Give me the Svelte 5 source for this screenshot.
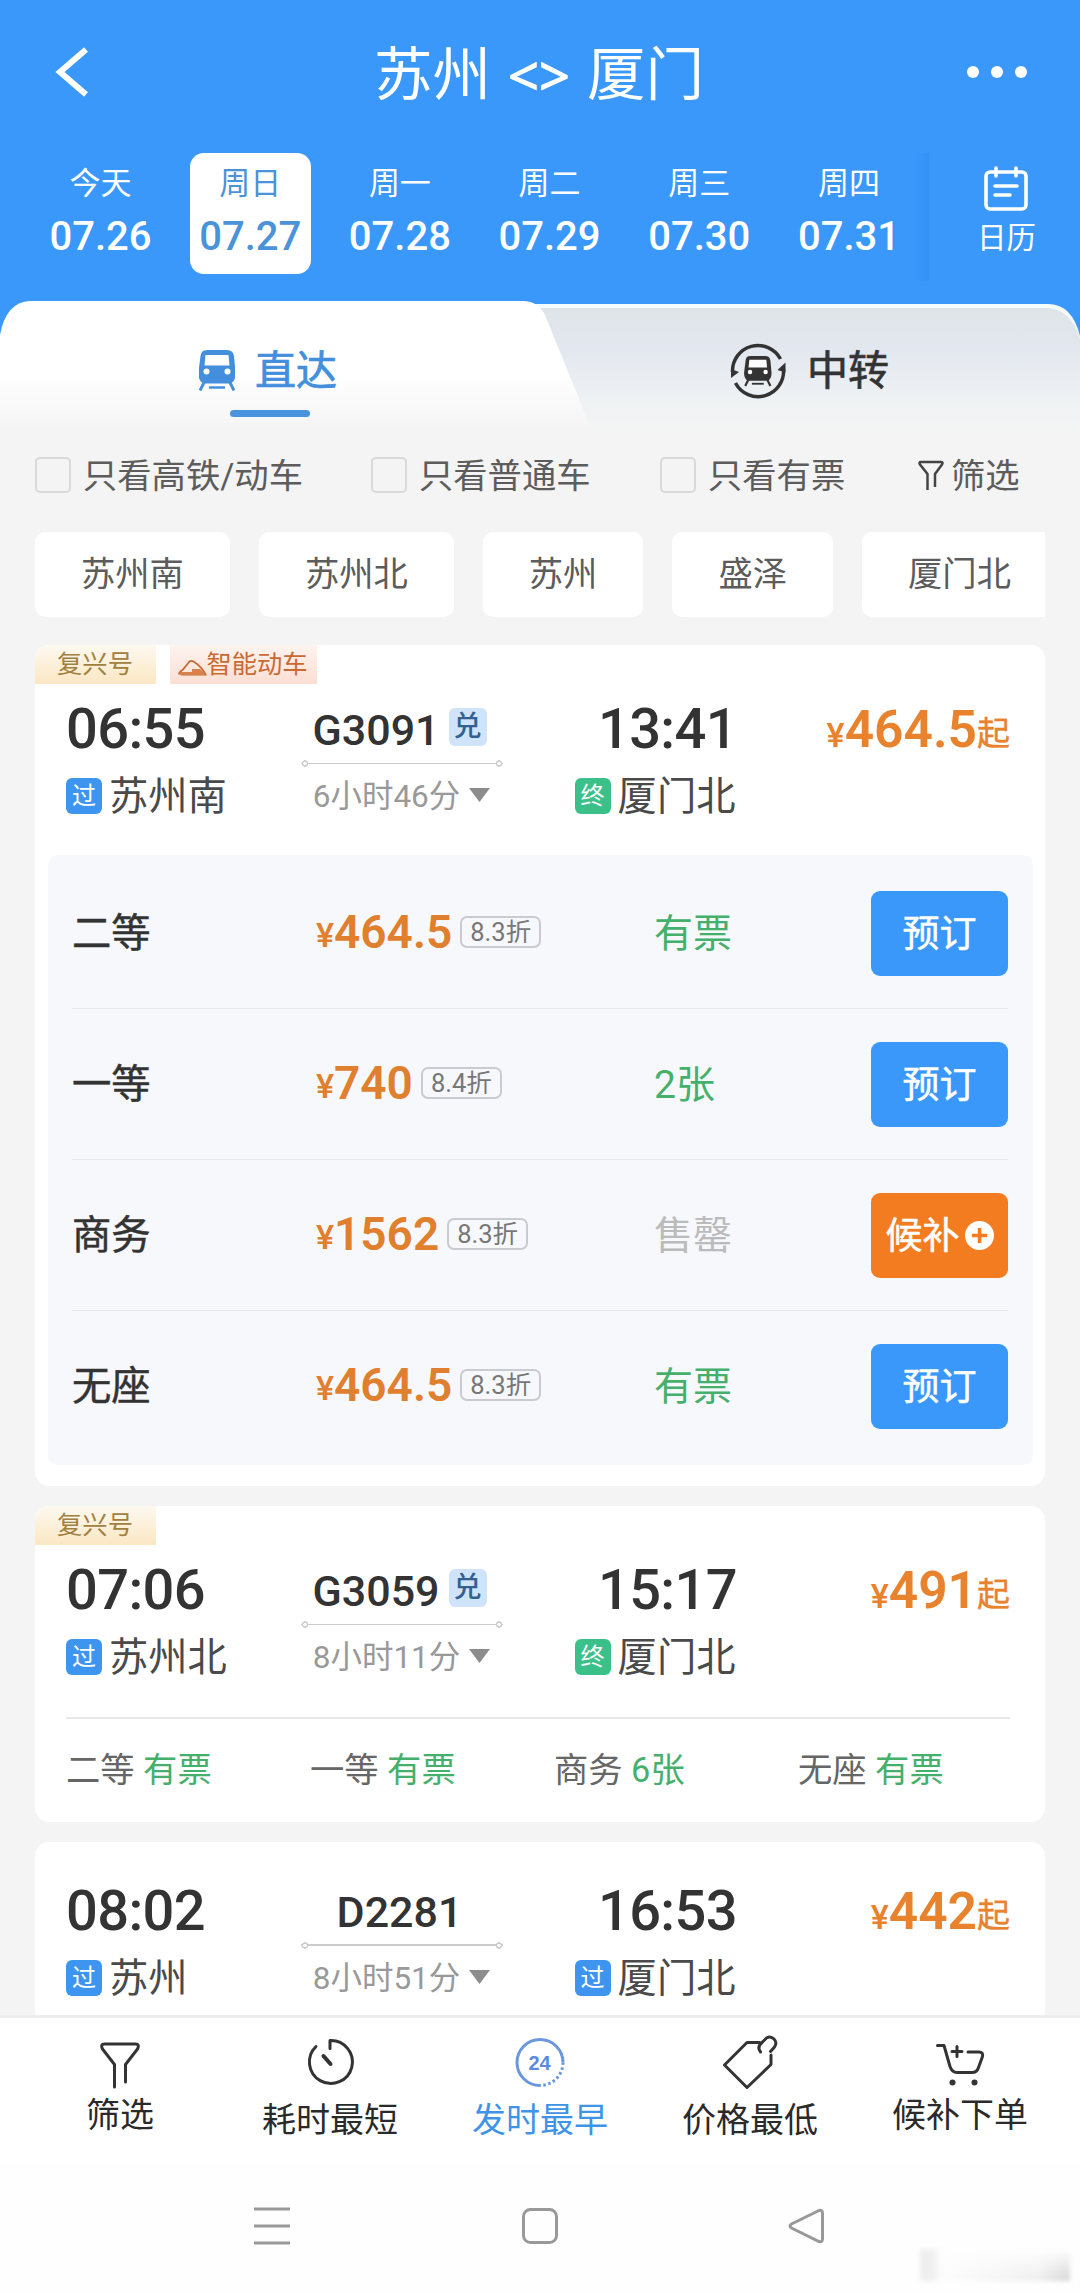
<script lang="ts">
    type Seat = { name: string; price: string; off: string; left: string };

    const days = [
        { label: "今天", date: "07.26" },
        { label: "周日", date: "07.27" },
        { label: "周一", date: "07.28" },
        { label: "周二", date: "07.29" },
        { label: "周三", date: "07.30" },
        { label: "周四", date: "07.31" },
    ];
    let day = $state("07.27");

    const checks = ["只看高铁/动车", "只看普通车", "只看有票"];
    const stations = ["苏州南", "苏州北", "苏州", "盛泽", "厦门北"];

    const seats: Seat[] = [
        { name: "二等", price: "464.5", off: "8.3折", left: "有票" },
        { name: "一等", price: "740", off: "8.4折", left: "2张" },
        { name: "商务", price: "1562", off: "8.3折", left: "售罄" },
        { name: "无座", price: "464.5", off: "8.3折", left: "有票" },
    ];

    const trains = [
        {
            no: "G3091", from: "苏州南", dep: "06:55", to: "厦门北", arr: "13:41", stop: "终",
            time: "6小时46分", price: "464.5", fuxing: true, smart: true, redeem: true,
            seats, brief: [],
        },
        {
            no: "G3059", from: "苏州北", dep: "07:06", to: "厦门北", arr: "15:17", stop: "终",
            time: "8小时11分", price: "491", fuxing: true, smart: false, redeem: true,
            seats: [],
            brief: [["二等", "有票"], ["一等", "有票"], ["商务", "6张"], ["无座", "有票"]],
        },
        {
            no: "D2281", from: "苏州", dep: "08:02", to: "厦门北", arr: "16:53", stop: "过",
            time: "8小时51分", price: "442", fuxing: false, smart: false, redeem: false,
            seats: [], brief: [],
        },
    ];
</script>

{#snippet train()}
    <path
        d="M8 0h20q6 0 7 6l1.500 16q.5 10-6 11.500h-25q-6.500-1.500-6-11.500L1.500 6Q2 0 8 0Z"
        fill="currentColor"
    />
    <path d="M6.500 5h23l1 10.500h-25Z" fill="#fbfcfd" />
    <circle cx="7.500" cy="21.500" r="3" fill="#fff" />
    <circle cx="28.500" cy="21.500" r="3" fill="#fff" />
    <path d="M5 32.500 1 40.500M31 32.500l4 8" stroke="currentColor" stroke-width="3" />
    <path d="M10 37.500h16" stroke="currentColor" stroke-width="2.500" />
{/snippet}

<div class="phone">
    <header>
        <div class="title-bar">
            <svg class="back" width="60" height="50" viewBox="0 0 60 50">
                <path d="M37 2.500 11 25l26 22.500" />
            </svg>
            <h1><span>苏州</span><span class="swap">&lt;&gt;</span><span>厦门</span></h1>
            <div class="more"><i></i><i></i><i></i></div>
        </div>

        <div class="days">
            {#each days as d}
                <button class:on={day === d.date} onclick={() => (day = d.date)}>
                    <span>{d.label}</span>
                    <b>{d.date}</b>
                </button>
            {/each}
            <div class="edge"></div>
            <div class="calendar">
                <svg width="46" height="48" viewBox="0 0 46 48">
                    <rect x="3" y="8" width="40" height="37" rx="4" />
                    <path d="M13 4v8M33 4v8M12 22h22M12 31h15" />
                </svg>
                <span>日历</span>
            </div>
        </div>
    </header>

    <div class="tabs">
        <svg class="shape" width="1080" height="130" viewBox="0 0 1080 130">
            <defs>
                <linearGradient id="grey" x1="0" y1="0" x2="0" y2="1">
                    <stop offset="0" stop-color="#dfe4e8" />
                    <stop offset=".35" stop-color="#e3e8f0" />
                    <stop offset=".8" stop-color="#f0f3f4" />
                    <stop offset="1" stop-color="#f4f4f4" />
                </linearGradient>
                <linearGradient id="white" x1="0" y1="0" x2="0" y2="1">
                    <stop offset=".55" stop-color="#fff" />
                    <stop offset="1" stop-color="#f4f4f4" />
                </linearGradient>
            </defs>
            <path d="M500 3h548q24 0 32 32v95H500Z" fill="#f3fbfd" />
            <path d="M500 7h546q24 0 34 30v93H500Z" fill="url(#grey)" />
            <path d="M0 130V34Q6 1 30 0h493q15 0 22 14l47 116Z" fill="url(#white)" />
        </svg>
        <div class="tab active">
            <svg width="36" height="41" viewBox="0 0 36 41">{@render train()}</svg>
            <span>直达</span>
        </div>
        <div class="tab">
            <svg class="loop" width="58" height="58" viewBox="0 0 58 58">
                <g fill="none" stroke="currentColor" stroke-width="3.500">
                    <path d="M51.500 17A25.500 25.500 0 0 0 3.500 30" />
                    <path d="M6.500 41A25.500 25.500 0 0 0 54.500 27" />
                </g>
                <path d="m2 36 8-6-8-3ZM56.500 20.500 48.500 28l8 2.500Z" fill="currentColor" />
                <g transform="translate(15.500 14) scale(.74 .74)">{@render train()}</g>
            </svg>
            <span>中转</span>
        </div>
    </div>

    <div class="filters">
        {#each checks as c}
            <label><i class="box"></i><span>{c}</span></label>
        {/each}
        <div class="filter">
            <svg width="28" height="32" viewBox="0 0 28 32">
                <path d="M10.500 31V15L3 5.500Q1.500 3 4 3h20q2.500 0 1 2.500L18 15v13" />
            </svg>
            <span>筛选</span>
        </div>
    </div>

    <div class="chips">
        {#each stations as s}<span>{s}</span>{/each}
    </div>

    <main>
        {#each trains as t}
            <section>
                <div class="tags" class:empty={!t.fuxing}>
                    {#if t.fuxing}<span class="fuxing">复兴号</span>{/if}
                    {#if t.smart}
                        <span class="smart">
                            <svg width="29" height="18" viewBox="0 0 29 18">
                                <path d="M1 15.500Q1 13 5 10.500L11 3q2-2 4.500-.5Q24 8 27.500 15.500H3" />
                                <path class="fill" d="M14 10h8q4 3 5 6H2v-3h12Z" />
                            </svg>智能动车
                        </span>
                    {/if}
                </div>

                <div class="trip">
                    <div class="stop">
                        <b class="clock">{t.dep}</b>
                        <div class="place"><i class="mark">过</i><span>{t.from}</span></div>
                    </div>
                    <div class="ride">
                        <div class="no">{t.no}{#if t.redeem}<i>兑</i>{/if}</div>
                        <div class="rule"></div>
                        <div class="time">
                            <span>{t.time}</span>
                            <svg width="21" height="14" viewBox="0 0 21 14"><path d="M0 0h21L10.500 14Z" /></svg>
                        </div>
                    </div>
                    <div class="stop end">
                        <b class="clock">{t.arr}</b>
                        <div class="place">
                            <i class="mark" class:last={t.stop === "终"}>{t.stop}</i><span>{t.to}</span>
                        </div>
                    </div>
                    <div class="fare"><small>¥</small><b>{t.price}</b><em>起</em></div>
                </div>

                {#if t.seats.length}
                    <div class="seats">
                        {#each t.seats as s}
                            <div class="seat">
                                <span class="name">{s.name}</span>
                                <span class="price">
                                    <small>¥</small><b>{s.price}</b><i>{s.off}</i>
                                </span>
                                <span class="left" class:none={s.left === "售罄"}>{s.left}</span>
                                {#if s.left === "售罄"}
                                    <button class="wait">
                                        <span>候补</span>
                                        <svg width="29" height="29" viewBox="0 0 29 29">
                                            <circle cx="14.500" cy="14.500" r="14.500" fill="#fff" />
                                            <path d="M14.500 7v15M7 14.500h15" stroke="#f47c20" stroke-width="3.500" />
                                        </svg>
                                    </button>
                                {:else}
                                    <button><span>预订</span></button>
                                {/if}
                            </div>
                        {/each}
                    </div>
                {/if}

                {#if t.brief.length}
                    <div class="brief">
                        {#each t.brief as [name, left]}
                            <span>{name} <em>{left}</em></span>
                        {/each}
                    </div>
                {/if}
            </section>
        {/each}
    </main>

    <nav>
        <div>
            <svg width="60" height="60" viewBox="0 0 60 60">
                <path d="M24.500 53V30.500L12.500 15Q10 10 14.500 10h31q4.500 0 2 5L35.500 30.500V48" />
            </svg>
            <span>筛选</span>
        </div>
        <div class="low">
            <svg width="60" height="60" viewBox="0 0 60 60">
                <path d="M16 12.500A21.500 21.500 0 1 0 30 6.500v8" />
                <path d="m23.500 22 7 8" stroke-width="4" />
            </svg>
            <span>耗时最短</span>
        </div>
        <div class="low on">
            <svg width="60" height="60" viewBox="0 0 60 60">
                <path d="M30 51.500A23 23 0 1 1 53 28.500" />
                <path d="M53 28.500A23 23 0 0 1 30 51.500" stroke-dasharray="2.500 2.500" />
                <text x="29.500" y="36" text-anchor="middle">24</text>
            </svg>
            <span>发时最早</span>
        </div>
        <div class="low">
            <svg width="60" height="60" viewBox="0 0 60 60">
                <path d="M39.500 8.500H27L4.500 31 27 53.500 51 30.500V21" />
                <path d="M40.500 18q-4-5 2-10l4-4q4-2.500 7.500 1t.5 8l-4 4.500" />
            </svg>
            <span>价格最低</span>
        </div>
        <div>
            <svg width="60" height="60" viewBox="0 0 60 60">
                <path d="M7.500 11.500H14l6 21q2 6 7 6h15q5 0 6.500-5l4-11q1-4.500-3.500-4.500H38" />
                <path d="M27 12.500v10M22 17.500h10" />
                <circle cx="22.500" cy="48.500" r="3" />
                <circle cx="44.500" cy="48.500" r="3" />
            </svg>
            <span>候补下单</span>
        </div>
    </nav>

    <footer>
        <svg width="40" height="40" viewBox="0 0 40 40"><path d="M2 3h36M2 20h36M2 37h36" /></svg>
        <svg width="40" height="40" viewBox="0 0 40 40">
            <rect x="3.500" y="3.500" width="33" height="33" rx="7" />
        </svg>
        <svg width="40" height="40" viewBox="0 0 40 40">
            <path d="M31 4.500 3.500 18q-3 2 0 4L31 35.500q3.500 1 3.500-2.500V7q0-3.500-3.500-2.500Z" />
        </svg>
        <div class="smudge"></div>
    </footer>
</div>

<style>
    :global(body) {
        margin: 0;
        background: #f4f4f4;
    }
    .phone {
        width: 1080px;
        height: 2292px;
        overflow: hidden;
        display: flex;
        flex-direction: column;
        background: #f4f4f4;
        color: #333;
        font-family: Roboto, "Noto Sans CJK SC", sans-serif;
        font-weight: 400;
    }
    i,
    em {
        font-style: normal;
    }
    button {
        border: 0;
        padding: 0;
        font: inherit;
        color: inherit;
        background: none;
    }

    header {
        height: 301px;
        background: #3a98fb;
        color: #fff;
        flex: none;
        margin-bottom: -40px;
        padding-bottom: 40px;
    }
    .title-bar {
        height: 144px;
        display: flex;
        align-items: center;
        justify-content: space-between;
        padding: 0 53px 0 49px;
    }
    .back path {
        fill: none;
        stroke: #fff;
        stroke-width: 6;
    }
    h1 {
        display: flex;
        gap: 17px;
        margin: 6px 0 0 2px;
        font-size: 58.5px;
        line-height: 60px;
        font-weight: 400;
    }
    .swap {
        font-family: "Noto Sans", sans-serif;
        font-size: 54px;
        -webkit-text-stroke: 1px #fff;
    }
    .more {
        display: flex;
        gap: 12px;
    }
    .more i {
        width: 12px;
        height: 12px;
        border-radius: 50%;
        background: #fff;
    }
    .days {
        display: flex;
        margin: 9px 0 0 25px;
    }
    .days button {
        width: 121px;
        height: 121px;
        margin: 0 14.350px;
        border-radius: 14px;
        display: flex;
        flex-direction: column;
        align-items: center;
    }
    .days button:first-child {
        margin-left: 15px;
    }
    .days button.on {
        background: #fff;
        color: #4a93d8;
    }
    .days span {
        font-size: 31px;
        line-height: 36px;
        margin-top: 13px;
    }
    .days b {
        font-size: 40px;
        line-height: 48px;
        margin-top: 11px;
        font-weight: 500;
    }
    .edge {
        width: 16px;
        height: 128px;
        margin-left: -11px;
        background: linear-gradient(90deg, transparent, rgba(20, 100, 220, 0.15));
    }
    .calendar {
        flex: 1;
        display: flex;
        flex-direction: column;
        align-items: center;
        padding: 11px 0 0 4px;
    }
    .calendar svg {
        fill: none;
        stroke: #fff;
        stroke-width: 3.6;
        stroke-linecap: round;
    }
    .days .calendar span {
        font-size: 29.5px;
        margin-top: 8px;
    }

    .tabs {
        position: relative;
        height: 130px;
        flex: none;
        display: flex;
    }
    .shape {
        position: absolute;
        inset: 0;
        background: linear-gradient(#3a98fb 40px, transparent 40px);
    }
    .tab {
        position: relative;
        box-sizing: border-box;
        width: 540px;
        height: 138px;
        display: flex;
        align-items: center;
        justify-content: center;
        gap: 20px;
        padding-right: 2px;
        font-size: 41px;
        -webkit-text-stroke: 0.7px currentColor;
    }
    .tab svg {
        margin-top: 1px;
    }
    .tab span {
        margin-top: -6px;
    }
    .tab.active {
        padding-right: 4px;
        color: #438fdd;
    }
    .tab.active::after {
        content: "";
        position: absolute;
        left: 230px;
        bottom: 22px;
        width: 80px;
        height: 7px;
        border-radius: 4px;
        background: #4a94df;
    }

    .filters {
        display: flex;
        align-items: center;
        height: 87px;
        padding-left: 35px;
        font-size: 34.3px;
        color: #5c5c5c;
        flex: none;
    }
    .filters span {
        margin-top: -4px;
    }
    .filters label {
        display: flex;
        align-items: center;
        width: 336px;
    }
    .filters label:nth-child(2) {
        width: 289px;
    }
    .filters label:nth-child(3) {
        width: 257px;
    }
    .box {
        width: 32px;
        height: 32px;
        margin-right: 12px;
        border: 2px solid #d9d9d9;
        border-radius: 5px;
    }
    .filter {
        display: flex;
        align-items: center;
        gap: 6px;
    }
    .filter svg {
        fill: none;
        stroke: #444;
        stroke-width: 2.5;
    }

    .chips {
        display: flex;
        gap: 29px;
        flex: none;
        height: 85px;
        margin: 14px 35px 28px;
        overflow: hidden;
    }
    .chips span {
        flex: none;
        padding: 0 46px;
        border-radius: 10px;
        background: #fff;
        color: #5c5c5c;
        font-size: 34.3px;
        line-height: 85px;
    }

    main {
        flex: 1;
        min-height: 0;
        overflow: hidden;
        padding: 0 35px;
    }
    section {
        background: #fff;
        border-radius: 14px;
        margin-bottom: 20px;
        overflow: hidden;
    }
    section:last-child {
        padding-bottom: 60px;
    }
    .tags {
        height: 39px;
        display: flex;
        gap: 14px;
        font-size: 25.3px;
        line-height: 40px;
    }
    .tags.empty {
        height: 24px;
    }
    .fuxing {
        width: 120px;
        padding-right: 1px;
        text-align: center;
        color: #a1803f;
        background: linear-gradient(#fdf9f0, #fbe7c3);
    }
    .smart {
        width: 147px;
        display: flex;
        align-items: center;
        justify-content: center;
        color: #c96a33;
        background: linear-gradient(#fdf3ef, #fbdfd3);
    }
    .smart svg {
        fill: none;
        stroke: #c96a33;
        stroke-width: 1.8;
        margin: 6px -1px 0 -1px;
    }
    .smart .fill {
        fill: #d8814d;
        stroke: none;
    }

    .trip {
        display: grid;
        grid-template-columns: 238px 196px 237px 1fr;
        padding: 16px 35px 0 31px;
        height: 115px;
    }
    .clock {
        display: block;
        height: 56px;
        line-height: 58px;
        margin-bottom: 19px;
        font-size: 56px;
        font-weight: 500;
        letter-spacing: -0.6px;
        color: #333;
    }
    .end {
        text-align: right;
    }
    .place {
        display: flex;
        align-items: center;
        height: 41px;
        font-size: 39.3px;
        line-height: 40px;
        color: #4a4a4a;
    }
    .place span {
        margin-top: 3px;
    }
    .end .place {
        justify-content: flex-end;
        margin-right: 1.5px;
    }
    .mark {
        width: 36px;
        height: 36px;
        line-height: 36px;
        margin-right: 7px;
        border-radius: 6px;
        background: #3e95f0;
        color: #fff;
        font-size: 24px;
        text-align: center;
    }
    .mark.last {
        background: #3cc08a;
    }
    .no {
        display: flex;
        align-items: center;
        justify-content: center;
        height: 56px;
        line-height: 60px;
        padding-top: 2px;
        margin: 0 0 -2px -5px;
        font-size: 43px;
        font-weight: 500;
        gap: 9px;
    }
    .no i {
        width: 38px;
        height: 38px;
        line-height: 38px;
        border-radius: 6px;
        background: #cfe4fa;
        color: #33608f;
        font-size: 28px;
        text-align: center;
        margin-top: -6px;
    }
    .rule {
        height: 9px;
        margin: 3px -3px 7px;
        background:
            radial-gradient(circle at 4px 4.5px, #fff 1.5px, #ccc 2px, #ccc 3px, transparent 3.5px),
            radial-gradient(circle at 198px 4.5px, #fff 1.5px, #ccc 2px, #ccc 3px, transparent 3.5px),
            linear-gradient(transparent 3.5px, #ccc 3.5px, #ccc 5px, transparent 5px);
    }
    .time {
        display: flex;
        align-items: center;
        justify-content: center;
        gap: 9px;
        height: 40px;
        margin-left: -1px;
        font-size: 31.5px;
        color: #999;
    }
    .time span {
        margin-top: -4px;
    }
    .time svg {
        fill: #8c8c8c;
    }
    .fare {
        display: flex;
        align-items: baseline;
        justify-content: flex-end;
        height: 56px;
        line-height: 60px;
        color: #e8822d;
    }
    .fare small {
        font-size: 34px;
        font-weight: 500;
    }
    .fare b {
        font-size: 51.5px;
        font-weight: 600;
    }
    .fare em {
        position: relative;
        top: -2px;
        font-size: 33px;
        -webkit-text-stroke: 0.4px currentColor;
    }

    .seats {
        margin: 40px 12px 21px 13px;
        padding: 3px 25px 3px 24px;
        border-radius: 10px;
        background: #f6f8fc;
    }
    .seat {
        display: flex;
        align-items: center;
        height: 150px;
        border-bottom: 1px solid #e6e8ec;
    }
    .seat:last-child {
        border-color: transparent;
    }
    .name {
        width: 244px;
        margin-top: -7px;
        font-size: 39.3px;
        -webkit-text-stroke: 0.5px currentColor;
    }
    .price {
        width: 338px;
        display: flex;
        align-items: center;
        margin-top: -2px;
        color: #e07f2e;
    }
    .price small {
        font-size: 34px;
        font-weight: 500;
        margin: 6px 0 0;
    }
    .price b {
        font-size: 46px;
        font-weight: 600;
    }
    .price i {
        margin-left: 8px;
        padding: 0 8px;
        border: 2px solid #c9cbd0;
        border-radius: 7px;
        color: #777;
        font-size: 25.5px;
        line-height: 28px;
    }
    .left {
        flex: 1;
        margin-top: -6px;
        font-size: 39px;
        color: #45b06c;
    }
    .left.none {
        color: #bbb;
    }
    .seat button {
        width: 137px;
        height: 85px;
        border-radius: 9px;
        background: #3a98fb;
        color: #fff;
        font-size: 37px;
        -webkit-text-stroke: 0.5px currentColor;
        display: flex;
        align-items: center;
        justify-content: center;
    }
    .seat button span {
        margin-top: -5px;
    }
    .seat .wait {
        background: #f47c20;
        gap: 5px;
    }

    .brief {
        display: grid;
        grid-template-columns: repeat(4, 244px);
        margin: 41px 35px 0 31px;
        border-top: 2px solid #e8e8e8;
        height: 103px;
        line-height: 103px;
        font-size: 34.3px;
        color: #666;
    }
    .brief em {
        color: #45b06c;
    }

    nav {
        height: 144px;
        flex: none;
        display: flex;
        padding: 0 15px;
        border-top: 3px solid #eee;
        background: #fff;
        font-size: 34px;
        color: #2a2a2a;
    }
    nav div {
        width: 210px;
        display: flex;
        flex-direction: column;
        align-items: center;
        padding-top: 16px;
    }
    nav svg {
        fill: none;
        stroke: #333;
        stroke-width: 3;
        stroke-linecap: round;
        stroke-linejoin: round;
    }
    nav circle {
        fill: #333;
        stroke: none;
    }
    nav text {
        fill: #5b8bdc;
        stroke: none;
        font: bold 20px "Liberation Sans", sans-serif;
    }
    nav .on {
        color: #3f94e6;
    }
    nav .on svg {
        stroke: #6c97df;
        stroke-linecap: butt;
    }
    nav span {
        line-height: 40px;
        margin-top: 1px;
    }
    nav .low span {
        margin-top: 6px;
    }

    footer {
        position: relative;
        height: 130px;
        flex: none;
        display: flex;
        gap: 228px;
        padding-left: 252px;
        background: #fefefe;
    }
    footer svg {
        margin-top: 44px;
        fill: none;
        stroke: #999;
        stroke-width: 3;
    }
    .smudge {
        position: absolute;
        right: 10px;
        bottom: 11px;
        width: 150px;
        height: 32px;
        background:
            linear-gradient(90deg, #efefef 8%, rgba(254, 254, 254, 0) 14%),
            linear-gradient(#fefefe, transparent),
            linear-gradient(90deg, #fcfcfc 20%, #eee 80%, #d4d4d4);
        filter: blur(2px);
    }
</style>
